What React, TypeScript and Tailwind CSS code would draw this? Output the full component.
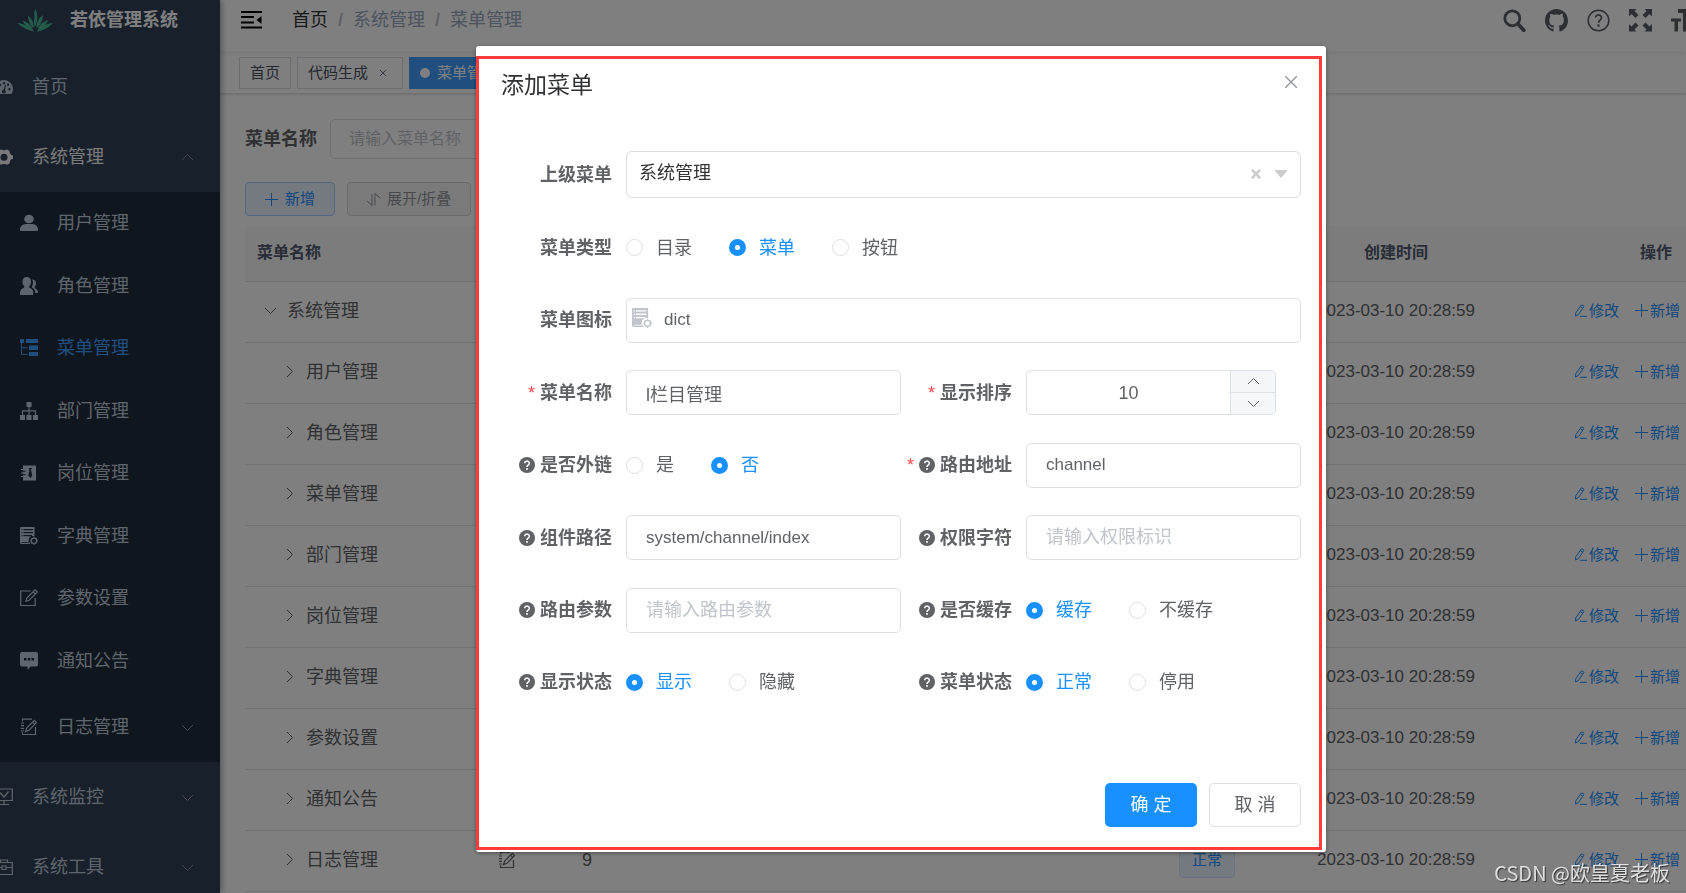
import { useState } from 'react';
import type { ReactNode } from 'react';

type IconName =
  | 'dashboard' | 'system' | 'user' | 'peoples' | 'treeTable' | 'tree' | 'post'
  | 'dict' | 'edit' | 'message' | 'log' | 'monitor' | 'tool';

const iconShapes: Record<IconName, ReactNode> = {
  dashboard: (
    <path
      fillRule="evenodd"
      fill="currentColor"
      d="M9 2a9 9 0 0 0-9 9c0 1.500.3 2.700.9 3.900.3.700.700 1.100 1.500 1.100h13.200c.8 0 1.200-.4 1.500-1.100.6-1.200.9-2.400.9-3.900a9 9 0 0 0-9-9zM3.500 10a1.200 1.200 0 1 1 0 2.400 1.200 1.200 0 0 1 0-2.400zM5.200 5.800a1.200 1.200 0 1 1 0 2.400 1.200 1.200 0 0 1 0-2.400zM9 4a1.200 1.200 0 1 1 0 2.400A1.200 1.200 0 0 1 9 4zm4 1.500a1.200 1.200 0 1 1 0 2.400 1.200 1.200 0 0 1 0-2.400zm1.500 4.500a1.200 1.200 0 1 1 0 2.400 1.200 1.200 0 0 1 0-2.400zM10 7l1 .3-1 4.600a2 2 0 1 1-1.300-.3z"
    />
  ),
  system: (
    <path
      fillRule="evenodd"
      fill="currentColor"
      d="M6 1.500 8 2.200h2L12 1.500l2.600 1.500.3 2.200 1 1.600L18 7.700v3l-2.100.8-1 1.700-.3 2.200L12 16.800l-2-.8H8l-2 .8-2.600-1.500-.3-2.200-1-1.600L0 10.700v-3l2.100-.8 1-1.700.3-2.200zM9 5.700a3.500 3.500 0 1 0 0 7 3.500 3.500 0 0 0 0-7z"
    />
  ),
  user: (
    <g fill="currentColor">
      <ellipse cx="9" cy="5" rx="4.800" ry="4.300" />
      <path d="M0 15.500c0-3.500 3-5.300 5.500-5.500h7c2.500.2 5.500 2 5.500 5.500 0 1-.5 1.500-1.500 1.500h-15C.5 17 0 16.500 0 15.500z" />
    </g>
  ),
  peoples: (
    <g fill="currentColor">
      <path d="M6.800 0C9.500 0 11 2 11 4.700c0 2-.8 3.600-2 4.800 0 1 1 1.500 2.300 2.200 1.700.9 2 2.400 2 5.300 0 .5-.3 1-.8 1H1c-.6 0-1-.4-1-1 0-2.900.4-4.400 2.200-5.300 1.300-.7 2.200-1.200 2.200-2.200-1.200-1.200-1.900-2.800-1.900-4.800C2.500 2 4 0 6.800 0z" />
      <path d="M12 2.500c2.500 0 4 1.500 4 3.800 0 1.500-.6 2.900-1.500 3.700 0 1 .5 1.300 1.500 1.900 1.500.8 2 1.800 2 4.100h-2.700c-.2-3-1-4.200-2.500-5.100-.9-.5-1-.8-1-1 1-1.600 1.300-3 1.200-4.800 0-1-.3-1.800-1-2.600z" />
    </g>
  ),
  treeTable: (
    <g fill="currentColor">
      <path d="M0 0h4v4H0zM6 0h12v4H6zM9 6.500h9v4.500H9zM9 13h9v4H9z" />
      <path d="M1.500 3.500v11.800h6M1.500 8.800h6" fill="none" stroke="currentColor" />
    </g>
  ),
  tree: (
    <g fill="currentColor">
      <path d="M6.500 0h5v5h-5zM0 13h5v5H0zM6.500 13h5v5h-5zM13 13h5v5h-5z" />
      <path d="M9 5v8M2.500 13V8.800h13V13" fill="none" stroke="currentColor" strokeWidth="1.200" />
    </g>
  ),
  post: (
    <g>
      <path
        fillRule="evenodd"
        fill="currentColor"
        d="M3 1.500h13v15H3zM8.500 4h3.500L11 6l1.300 5.500-2 2.500-2-2.500L9.500 6z"
      />
      <path d="M1 5.500h4M1 9h4M1 12.500h4" stroke="currentColor" strokeWidth="1.200" />
      <path d="M3 7.200h2.500M3 10.700h2.500" stroke="#1f2d3d" />
    </g>
  ),
  dict: (
    <g>
      <path
        fillRule="evenodd"
        fill="currentColor"
        d="M1 0h13.500v9.500a4 4 0 0 0-3.500 7.500H1.500A1.500 1.500 0 0 1 0 15.500V1a1 1 0 0 1 1-1zM1.500 2v1.200h1V2zm2 0v1.200h9.500V2zM1.500 5v1.200h1V5zm2 0v1.200h9.500V5zM1.500 8v1.200h1V8zm2 0v1.200h8.500V8zM1.500 15v.8H10V15z"
      />
      <circle cx="14" cy="13.800" r="2.700" fill="none" stroke="currentColor" strokeWidth="1.200" />
      <path d="M14 9.800v1.500M14 16.300v1.700M10 13.800h1.500M16.500 13.800h1.500M11.500 11.200l.8.8M16.600 11.200l-.8.8M11.500 16.500l.8-.8M16.600 16.500l-.8-.8" stroke="currentColor" />
    </g>
  ),
  edit: (
    <g fill="none" stroke="currentColor" strokeWidth="1.200">
      <path d="M10.500 2H.7v14.500h14.500V9" />
      <path d="M15 .8 17.300 3 9 11.300l-3 .9.800-3.100zM13 2.800 15.200 5" />
    </g>
  ),
  message: (
    <path
      fillRule="evenodd"
      fill="currentColor"
      d="M2 0h14a2 2 0 0 1 2 2v10.500a2 2 0 0 1-2 2h-5.500l-3 3.500v-3.500H2a2 2 0 0 1-2-2V2a2 2 0 0 1 2-2zM4 6v2.500h2.500V6zm3.800 0v2.500h2.500V6zm3.700 0v2.500H14V6z"
    />
  ),
  log: (
    <g fill="none" stroke="currentColor" strokeWidth="1.200">
      <path d="M12 1.200H2.500v2M2.500 14.500v2h13V9" />
      <path d="M1 5h3M1 7.700h3M1 10.300h3M1 13h3" />
      <path d="M14.300 2.300 16.500 4.500 9 12.300l-3.500 1.200 1.200-3.500zM12.500 4.200l2.200 2.200" />
    </g>
  ),
  monitor: (
    <g fill="none" stroke="currentColor" strokeWidth="1.200">
      <path d="M.7 1h16.600v11.500H.7zM9 12.500v4M4 16.500h10M5 4.500l4 4.500 4.500-5.500" />
    </g>
  ),
  tool: (
    <g fill="none" stroke="currentColor" strokeWidth="1.200">
      <path d="M.7 4.500h16.600v12H.7zM5.500 4.500V2h7v2.500M.7 9.500h6M11.300 9.500h6M7 8h4v3.500H7z" />
    </g>
  ),
};

function Icon({ name, className = 'size-[18px]' }: { name: IconName; className?: string }) {
  return (
    <svg viewBox="0 0 18 18" className={`shrink-0 ${className}`} aria-hidden="true">
      {iconShapes[name]}
    </svg>
  );
}

const chevronPaths = {
  up: 'M1 9 6.500 3.500 12 9',
  down: 'M1 4 6.500 9.500 12 4',
  right: 'M4 1 9.500 6.500 4 12',
};

function Chevron({ dir, className = '' }: { dir: keyof typeof chevronPaths; className?: string }) {
  return (
    <svg viewBox="0 0 13 13" className={`size-[13px] shrink-0 ${className}`} fill="none" stroke="currentColor" aria-hidden="true">
      <path d={chevronPaths[dir]} />
    </svg>
  );
}

const systemChildren: { icon: IconName; label: string }[] = [
  { icon: 'user', label: '用户管理' },
  { icon: 'peoples', label: '角色管理' },
  { icon: 'treeTable', label: '菜单管理' },
  { icon: 'tree', label: '部门管理' },
  { icon: 'post', label: '岗位管理' },
  { icon: 'dict', label: '字典管理' },
  { icon: 'edit', label: '参数设置' },
  { icon: 'message', label: '通知公告' },
];

const menuRows = ['系统管理', ...systemChildren.map((item) => item.label), '日志管理'];

interface SideItemProps {
  icon: IconName;
  label: string;
  arrow?: 'up' | 'down';
  nested?: boolean;
  className?: string;
}

function SideItem({ icon, label, arrow, nested, className = 'h-[70px] text-[#bfcbd9]' }: SideItemProps) {
  return (
    <a href="#" className={`flex items-center gap-[19px] pr-[26px] ${nested ? 'pl-[50px]' : 'pl-[25px]'} ${className}`}>
      <Icon name={icon} />
      <span className="flex-1">{label}</span>
      {arrow && <Chevron dir={arrow} className="text-[#909399]" />}
    </a>
  );
}

function Sidebar() {
  return (
    <aside className="relative z-10 -ml-[30px] w-[250px] shrink-0 bg-[#304156] shadow-[2px_0_6px_rgba(0,21,41,0.35)]">
      <div className="flex h-[52px] items-center gap-[17px] pb-3 pl-[47px]">
        <svg viewBox="0 0 36 23" className="h-[23px] w-9" fill="#47b594" aria-hidden="true">
          <path d="M18 18C15.500 13 18 10 17.300 5.500c-.3-2 .2-4 1.200-5.500 2.500 5 2.500 12-.5 18z" />
          <path d="M16.800 19C12 15.500 11.500 11 11 6.500c3.500 3 6 7 5.800 12.500zM19.500 19c.2-6 2-10 6.500-13-.2 5-1.500 9.500-6.500 13z" />
          <path d="M16 20.500C10.500 18.500 7 15.500 5.500 11.500c5.500 1.800 8.500 4.500 10.500 9zM20.500 20.500c2-4.500 5-7.500 10.500-9.500-1.500 4.500-5 8-10.500 9.500z" />
          <path d="M17.500 22.800C11 21.500 5 18.500 0 14c6.500.8 13 3 17.500 8.800zM19.500 22.800C23.500 17 29.500 14.800 36 14c-4.500 4.500-10 7.800-16.500 8.800z" />
        </svg>
        <h1 className="font-bold text-white">若依管理系统</h1>
      </div>
      <nav>
        <SideItem icon="dashboard" label="首页" />
        <SideItem icon="system" label="系统管理" arrow="up" className="h-[70px] text-[#f4f4f5]" />
        <div className="bg-[#1f2d3d]">
          <div className="grid h-[500px] auto-rows-fr">
            {systemChildren.map((item) => (
              <SideItem
                key={item.label}
                icon={item.icon}
                label={item.label}
                nested
                className={item.label === '菜单管理' ? 'text-[#409eff]' : 'text-[#bfcbd9]'}
              />
            ))}
          </div>
          <SideItem icon="log" label="日志管理" arrow="down" nested />
        </div>
        <SideItem icon="monitor" label="系统监控" arrow="down" />
        <SideItem icon="tool" label="系统工具" arrow="down" />
      </nav>
    </aside>
  );
}

function Navbar() {
  return (
    <header className="flex h-[52px] items-center pb-3 pl-[21px] shadow-[0_1px_4px_rgba(0,21,41,0.08)]">
      <button type="button" aria-label="收起侧边栏">
        <svg viewBox="0 0 21 18" className="h-[18px] w-[21px]" aria-hidden="true">
          <path d="M0 1h21M0 6h13M0 11.500h13M0 16.500h21" stroke="#000" strokeWidth="1.800" />
          <path d="M20.500 5v8L15.500 9z" />
        </svg>
      </button>
      <nav className="ml-[30px] flex items-center text-[#97a8be]">
        <a href="#" className="text-[#303133]">首页</a>
        <span className="mx-2.5 font-bold text-[#c0c4cc]">/</span>
        <span>系统管理</span>
        <span className="mx-2.5 font-bold text-[#c0c4cc]">/</span>
        <span>菜单管理</span>
      </nav>
      <div className="-mr-2 ml-auto flex items-center gap-[19px] text-[#5a5e66]">
        <button type="button" aria-label="搜索">
          <svg viewBox="0 0 23 23" className="size-[23px]" fill="none" stroke="currentColor" aria-hidden="true">
            <circle cx="9.300" cy="9.300" r="7.500" strokeWidth="2.800" />
            <path d="m15 15 5.800 6.200" strokeWidth="3.800" strokeLinecap="round" />
          </svg>
        </button>
        <a href="#" aria-label="源码地址">
          <svg viewBox="0 0 16 16" className="size-[23px]" fill="currentColor" aria-hidden="true">
            <path d="M8 0C3.580 0 0 3.580 0 8c0 3.540 2.290 6.530 5.470 7.590.4.070.55-.17.55-.38 0-.19-.01-.82-.01-1.490-2.010.37-2.530-.49-2.690-.94-.09-.23-.48-.94-.82-1.130-.28-.15-.68-.52-.01-.53.63-.01 1.080.58 1.230.82.72 1.210 1.870.87 2.330.66.070-.52.28-.87.51-1.070-1.780-.2-3.640-.89-3.640-3.950 0-.87.31-1.590.82-2.150-.08-.2-.36-1.020.08-2.120 0 0 .67-.21 2.200.82.64-.18 1.320-.27 2-.27s1.360.09 2 .27c1.530-1.040 2.200-.82 2.200-.82.44 1.100.16 1.920.08 2.120.51.56.82 1.270.82 2.150 0 3.070-1.870 3.750-3.650 3.950.29.25.54.73.54 1.480 0 1.070-.01 1.930-.01 2.200 0 .21.15.46.55.38A8.010 8.010 0 0 0 16 8c0-4.420-3.580-8-8-8z" />
          </svg>
        </a>
        <a href="#" aria-label="文档地址">
          <svg viewBox="0 0 23 23" className="size-[23px]" fill="none" stroke="currentColor" aria-hidden="true">
            <circle cx="11.500" cy="11.500" r="10.300" strokeWidth="1.500" />
            <path d="M8.500 8.500a3 2.800 0 1 1 4.700 2.500c-1.200.8-1.700 1.300-1.700 2.800" strokeWidth="1.700" />
            <circle cx="11.500" cy="16.500" r="1.200" fill="currentColor" stroke="none" />
          </svg>
        </a>
        <button type="button" aria-label="全屏">
          <svg viewBox="0 0 23 23" className="size-[23px]" fill="currentColor" aria-hidden="true">
            <path d="M0 0h7.500l-2 2 4 4-3 3-4-4-2.500 2.500zM23 0h-7.500l2 2-4 4 3 3 4-4 2.500 2.500zM0 22.500h7.500l-2-2 4-4-3-3-4 4L0 15zM23 22.500h-7.500l2-2-4-4 3-3 4 4L23 15z" />
          </svg>
        </button>
        <button type="button" aria-label="布局大小">
          <svg viewBox="0 0 23 23" className="size-[23px]" fill="currentColor" aria-hidden="true">
            <path d="M7 0h16v4h-6v18.500h-5V4H7zM0 9.500h10v3H7v10H3.500v-10H0z" />
          </svg>
        </button>
      </div>
    </header>
  );
}

function TagsView() {
  return (
    <div className="flex h-[41px] items-center gap-1.5 pl-[19px] text-[15px] text-[#495060] shadow-[0_1px_3px_rgba(0,0,0,0.2)]">
      <a href="#" className="flex h-8 items-center border border-[#d8dce5] px-2.5">首页</a>
      <a href="#" className="flex h-8 items-center border border-[#d8dce5] pr-4 pl-2.5">
        代码生成
        <svg viewBox="0 0 6 6" className="ml-3 size-1.5" stroke="currentColor" strokeWidth="0.800" aria-hidden="true">
          <path d="m0 0 6 6M6 0 0 6" />
        </svg>
      </a>
      <a href="#" className="flex h-8 items-center gap-[7px] bg-[#409eff] px-[11px] text-white">
        <span className="size-2.5 rounded-full bg-white" />
        菜单管理
      </a>
    </div>
  );
}

function Plus() {
  return (
    <svg viewBox="0 0 13 13" className="size-[13px]" stroke="currentColor" aria-hidden="true">
      <path d="M6.500 0v13M0 6.500h13" />
    </svg>
  );
}

function MenuTable() {
  return (
    <table className="mt-2.5 w-full table-fixed border-collapse text-[#606266]">
      <colgroup>
        <col className="w-[212px]" />
        <col className="w-[100px]" />
        <col className="w-[60px]" />
        <col />
        <col className="w-[78px]" />
        <col className="w-[300px]" />
        <col className="w-[140px]" />
      </colgroup>
      <thead>
        <tr className="h-[55px] border-b border-[#dfe6ec] bg-[#f8f8f9] text-base text-[#515a6e]">
          <th className="pl-3 text-left">菜单名称</th>
          <td colSpan={4} />
          <th>创建时间</th>
          <th className="pr-3.5 text-right">操作</th>
        </tr>
      </thead>
      <tbody>
        {menuRows.map((label, index) => {
          const last = index === menuRows.length - 1;
          return (
            <tr key={label} className="h-[61px] border-b border-[#dfe6ec] *:pb-0.5">
              <td>
                <div className={`flex items-center gap-2.5 ${index === 0 ? 'pl-[19px]' : 'pl-[38px]'}`}>
                  <Chevron dir={index === 0 ? 'down' : 'right'} />
                  {label}
                </div>
              </td>
              <td>{last && <Icon name="log" className="mx-auto size-[18px]" />}</td>
              <td className="text-center">{last && '9'}</td>
              <td />
              <td className="text-center">
                {last && (
                  <span className="inline-block rounded border border-[#d1e9ff] bg-[#e8f4ff] px-3 text-[15px] leading-[34px] text-[#1890ff]">
                    正常
                  </span>
                )}
              </td>
              <td className="text-center text-[17px]">2023-03-10 20:28:59</td>
              <td>
                <div className="flex justify-end gap-4 pr-1.5 text-[15px] text-[#1890ff]">
                  <button type="button" className="flex items-center gap-0.5">
                    <svg viewBox="0 0 13 13" className="size-[13px]" fill="none" stroke="currentColor" aria-hidden="true">
                      <path d="M7.500.7 10 2.300 4.500 10.500l-3 1.500.3-3.200zM6.300 2.500l2.500 1.700M6 12.300h7" />
                    </svg>
                    修改
                  </button>
                  <button type="button" className="flex items-center gap-0.5">
                    <Plus />
                    新增
                  </button>
                </div>
              </td>
            </tr>
          );
        })}
      </tbody>
    </table>
  );
}

interface FieldProps {
  label: string;
  htmlFor?: string;
  required?: boolean;
  help?: boolean;
  wide?: boolean;
  children: ReactNode;
}

function Field({ label, htmlFor, required, help, wide, children }: FieldProps) {
  return (
    <div className={`flex items-center ${wide ? 'col-span-2' : ''}`}>
      <label htmlFor={htmlFor} className="flex w-[125px] shrink-0 items-center justify-end pr-3.5 font-bold whitespace-nowrap">
        {required && <span className="mr-[5px] font-normal text-[#ff4949]">*</span>}
        {help && (
          <svg viewBox="0 0 16 16" className="mr-[5px] size-4" aria-hidden="true">
            <circle cx="8" cy="8" r="8" fill="currentColor" />
            <path d="M5.700 6.300a2.300 2.200 0 1 1 3.500 1.900c-.8.5-1.200.8-1.200 1.700" fill="none" stroke="#fff" strokeWidth="1.500" />
            <circle cx="8" cy="12" r="1" fill="#fff" />
          </svg>
        )}
        {label}
      </label>
      {children}
    </div>
  );
}

interface RadioGroupProps {
  name: string;
  options: string[];
  initial: string;
}

function RadioGroup({ name, options, initial }: RadioGroupProps) {
  const [value, setValue] = useState(initial);

  return (
    <div role="radiogroup" className="flex h-[45px] items-center gap-[37px]">
      {options.map((option) => (
        <label
          key={option}
          className={`flex items-center gap-[13px] ${value === option ? 'text-[#1890ff]' : ''}`}
        >
          <input
            type="radio"
            name={name}
            checked={value === option}
            onChange={() => setValue(option)}
            className="size-[17px] appearance-none rounded-full border border-[#dcdfe6] bg-white checked:border-6 checked:border-[#1890ff]"
          />
          {option}
        </label>
      ))}
    </div>
  );
}

const inputClass =
  'h-[45px] w-full min-w-0 rounded-[5px] border border-[#dcdfe6] bg-white px-[19px] outline-none placeholder:text-[#c0c4cc]';

function MenuDialog() {
  const [order, setOrder] = useState(10);

  return (
    <div className="fixed inset-0 z-20 flex items-start justify-center bg-black/50 pt-[46px] pl-[116px]">
      <div
        role="dialog"
        aria-labelledby="dialog-title"
        className="relative w-full max-w-[850px] rounded-[3px] bg-white px-[25px] pt-6 pb-[25px] text-[#606266] shadow-[0_1px_4px_rgba(0,0,0,0.4)]"
      >
        <div className="flex items-center justify-between">
          <h2 id="dialog-title" className="text-[23px] leading-[30px] text-[#303133]">添加菜单</h2>
          <button type="button" aria-label="关闭" className="mr-1 mb-1.5 text-[#909399]">
            <svg viewBox="0 0 12 12" className="size-3" stroke="currentColor" strokeWidth="1.300" aria-hidden="true">
              <path d="m0 0 12 12M12 0 0 12" />
            </svg>
          </button>
        </div>

        <form className="mt-[51px] grid min-h-[554px] grid-cols-2 content-between">
          <Field label="上级菜单" htmlFor="parent" wide>
            <div className="relative flex-1">
              <select
                id="parent"
                className="block h-[47px] w-full appearance-none rounded-md border border-[#ddd] bg-white pb-1 pl-3 text-[#333] outline-none"
              >
                <option>系统管理</option>
              </select>
              <button type="button" aria-label="清除" className="absolute top-[18px] right-10 text-[#ccc]">
                <svg viewBox="0 0 10 10" className="size-2.5" stroke="currentColor" strokeWidth="2.600" aria-hidden="true">
                  <path d="m.8.8 8.400 8.400M9.200.8.8 9.200" />
                </svg>
              </button>
              <svg viewBox="0 0 12 8" className="pointer-events-none absolute top-[19px] right-3.5 h-2 w-3" fill="#ccc" aria-hidden="true">
                <path d="M0 0h12v1L6 8 0 1z" />
              </svg>
            </div>
          </Field>
          <Field label="菜单类型" wide>
            <RadioGroup name="type" options={['目录', '菜单', '按钮']} initial="菜单" />
          </Field>
          <Field label="菜单图标" htmlFor="icon" wide>
            <div className="relative flex-1">
              <Icon name="dict" className="absolute top-2.5 left-1.5 size-5 text-[#c0c4cc]" />
              <input
                id="icon"
                defaultValue="dict"
                className="block h-[45px] w-full rounded-[5px] border border-[#dcdfe6] pl-[37px] text-[17px] outline-none"
              />
            </div>
          </Field>
          <Field label="菜单名称" htmlFor="name" required>
            <input id="name" defaultValue="l栏目管理" className={inputClass} />
          </Field>
          <Field label="显示排序" htmlFor="order" required>
            <div className="flex h-[45px] w-[250px] overflow-hidden rounded-[5px] border border-[#dcdfe6]">
              <input
                id="order"
                inputMode="numeric"
                value={order}
                onChange={(e) => setOrder(Number(e.target.value) || 0)}
                className="min-w-0 flex-1 text-center outline-none"
              />
              <div className="flex w-[45px] flex-col divide-y divide-[#dcdfe6] border-l border-[#dcdfe6] bg-[#f5f7fa]">
                <button type="button" aria-label="增加" onClick={() => setOrder(order + 1)} className="flex flex-1 items-center justify-center">
                  <Chevron dir="up" />
                </button>
                <button type="button" aria-label="减少" onClick={() => setOrder(order - 1)} className="flex flex-1 items-center justify-center">
                  <Chevron dir="down" />
                </button>
              </div>
            </div>
          </Field>
          <Field label="是否外链" help>
            <RadioGroup name="frame" options={['是', '否']} initial="否" />
          </Field>
          <Field label="路由地址" htmlFor="path" required help>
            <input id="path" defaultValue="channel" className={`${inputClass} text-[17px]`} />
          </Field>
          <Field label="组件路径" htmlFor="component" help>
            <input id="component" defaultValue="system/channel/index" className={`${inputClass} text-[17px]`} />
          </Field>
          <Field label="权限字符" htmlFor="perms" help>
            <input id="perms" placeholder="请输入权限标识" className={inputClass} />
          </Field>
          <Field label="路由参数" htmlFor="query" help>
            <input id="query" placeholder="请输入路由参数" className={inputClass} />
          </Field>
          <Field label="是否缓存" help>
            <RadioGroup name="cache" options={['缓存', '不缓存']} initial="缓存" />
          </Field>
          <Field label="显示状态" help>
            <RadioGroup name="visible" options={['显示', '隐藏']} initial="显示" />
          </Field>
          <Field label="菜单状态" help>
            <RadioGroup name="status" options={['正常', '停用']} initial="正常" />
          </Field>
        </form>

        <div className="mt-[78px] flex justify-end gap-3">
          <button type="button" className="h-11 w-[92px] rounded-[5px] bg-[#1890ff] text-white">确 定</button>
          <button type="button" className="h-11 w-[92px] rounded-[5px] border border-[#dcdfe6] bg-white">取 消</button>
        </div>

        <div className="pointer-events-none absolute top-2.5 right-1 bottom-0.5 left-0 border-3 border-[#ff3b3b]" />
      </div>
    </div>
  );
}

export default function App() {
  return (
    <div className="relative flex h-screen overflow-hidden bg-white font-['Liberation_Sans','Noto_Sans_CJK_SC',sans-serif] text-[18px] leading-6">
      <Sidebar />
      <main className="min-w-0 flex-1">
        <Navbar />
        <TagsView />
        <div className="pt-[26px] pl-[25px]">
          <div className="flex items-center">
            <label htmlFor="search" className="mr-3.5 w-[71px] font-bold whitespace-nowrap text-[#606266]">菜单名称</label>
            <input
              id="search"
              placeholder="请输入菜单名称"
              className="h-10 w-[270px] rounded-[5px] border border-[#dcdfe6] px-[18px] text-base outline-none placeholder:text-[#c0c4cc]"
            />
          </div>
          <div className="mt-[23px] flex gap-3 text-[15px]">
            <button type="button" className="flex h-[34px] items-center gap-[7px] rounded-[4px] border border-[#a3d3ff] bg-[#e8f4ff] px-[19px] text-[#1890ff]">
              <Plus />
              新增
            </button>
            <button type="button" className="flex h-[34px] items-center gap-[7px] rounded-[4px] border border-[#d3d4d6] bg-[#f4f4f5] px-[19px] text-[#909399]">
              <svg viewBox="0 0 13 13" className="size-[13px]" fill="none" stroke="currentColor" aria-hidden="true">
                <path d="M0 8l5 4.500V1M13 5 8 .5V12.500" />
              </svg>
              展开/折叠
            </button>
          </div>
          <MenuTable />
        </div>
      </main>
      <MenuDialog />
      <div className="pointer-events-none absolute right-4 bottom-1.5 z-30 font-['Noto_Sans_CJK_SC',sans-serif] text-xl text-white/80 [text-shadow:1px_1px_1px_rgba(0,0,0,0.6)]">
        CSDN @欧皇夏老板
      </div>
    </div>
  );
}
